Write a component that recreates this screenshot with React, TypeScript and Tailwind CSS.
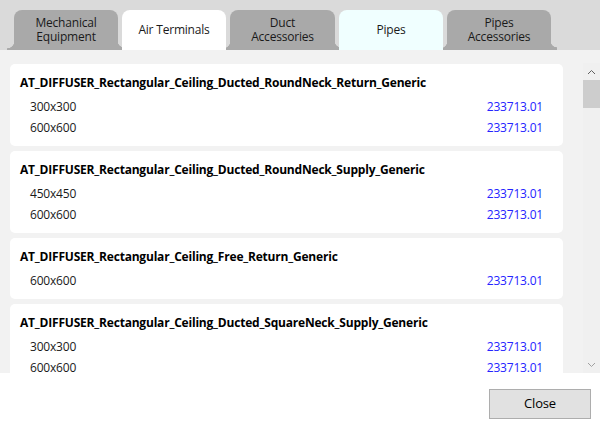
import React from "react";

type Item = { size: string; code: string };
type Family = { name: string; items: Item[] };

const FAMILIES: Family[] = [
  {
    name: "AT_DIFFUSER_Rectangular_Ceiling_Ducted_RoundNeck_Return_Generic",
    items: [
      { size: "300x300", code: "233713.01" },
      { size: "600x600", code: "233713.01" },
    ],
  },
  {
    name: "AT_DIFFUSER_Rectangular_Ceiling_Ducted_RoundNeck_Supply_Generic",
    items: [
      { size: "450x450", code: "233713.01" },
      { size: "600x600", code: "233713.01" },
    ],
  },
  {
    name: "AT_DIFFUSER_Rectangular_Ceiling_Free_Return_Generic",
    items: [{ size: "600x600", code: "233713.01" }],
  },
  {
    name: "AT_DIFFUSER_Rectangular_Ceiling_Ducted_SquareNeck_Supply_Generic",
    items: [
      { size: "300x300", code: "233713.01" },
      { size: "600x600", code: "233713.01" },
    ],
  },
];

type TabDef = { label: string[]; tone: "grey" | "white" | "azure"; width: string };

const TABS: TabDef[] = [
  { label: ["Mechanical", "Equipment"], tone: "grey", width: "w-[104px]" },
  { label: ["Air Terminals"], tone: "white", width: "w-[104px]" },
  { label: ["Duct", "Accessories"], tone: "grey", width: "w-[105px]" },
  { label: ["Pipes"], tone: "azure", width: "w-[104px]" },
  { label: ["Pipes", "Accessories"], tone: "grey", width: "w-[104px]" },
];

function Tab({ tab }: { tab: TabDef }) {
  const bg =
    tab.tone === "grey" ? "bg-[#a9a9a9]" : tab.tone === "white" ? "bg-white z-10" : "bg-[#f0ffff] z-10";
  return (
    <div
      className={`relative h-[40px] ${tab.width} ${bg} rounded-t-[8px] flex items-center justify-center text-center text-[12px] leading-[14px] text-[#1a1a1a]`}
    >
      {tab.tone === "grey" && (
        <>
          <span className="absolute bottom-0 left-[-7px] w-[7px] h-[9px] bg-[radial-gradient(circle_at_0_0,#dadada_7px,#a9a9a9_7.6px)]" />
          <span className="absolute bottom-0 right-[-6px] w-[6px] h-[9px] bg-[radial-gradient(circle_at_100%_0,#dadada_6px,#a9a9a9_6.6px)]" />
        </>
      )}
      <span>
        {tab.label.map((l, i) => (
          <React.Fragment key={l}>
            {i > 0 && <br />}
            {l}
          </React.Fragment>
        ))}
      </span>
    </div>
  );
}

function Card({ family }: { family: Family }) {
  return (
    <div className="bg-white rounded-[5px] pt-[11px] pb-[8px] shrink-0">
      <div className="px-[10px] h-[16px] leading-[16px] font-bold text-[12px] text-black whitespace-nowrap">
        {family.name}
      </div>
      <div className="mt-[5px]">
        {family.items.map((it, i) => (
          <div key={i} className="h-[21px] flex items-center justify-between pl-[20px] pr-[20px] text-[12px]">
            <span className="text-[#1a1a1a]">{it.size}</span>
            <span className="text-[#2424ff]">{it.code}</span>
          </div>
        ))}
      </div>
    </div>
  );
}

export default function App() {
  return (
    <div className="w-[600px] h-[434px] flex flex-col bg-white overflow-hidden font-['Open_Sans','Noto_Sans',sans-serif] tracking-[-0.2px]">
      <div className="h-[50px] bg-[#dadada] flex items-end pl-[14px] gap-[4px] shrink-0">
        {TABS.map((t) => (
          <Tab key={t.label.join(" ")} tab={t} />
        ))}
      </div>

      <div className="h-[323px] bg-[#f2f2f2] flex shrink-0">
        <div className="w-[553px] ml-[10px] pt-[14px] flex flex-col gap-[5px] overflow-hidden">
          {FAMILIES.map((f) => (
            <Card key={f.name} family={f} />
          ))}
        </div>
        <div className="ml-[20px] mt-[13px] w-[17px] bg-[#f0f0f0] flex flex-col">
          <div className="h-[17px] flex items-center justify-center text-[#606060]">
            <svg width="9" height="6" viewBox="0 0 9 6">
              <path d="M1 5 L4.5 1.5 L8 5" fill="none" stroke="currentColor" strokeWidth="1" />
            </svg>
          </div>
          <div className="h-[28px] bg-[#cdcdcd]" />
          <div className="flex-1" />
          <div className="h-[17px] flex items-center justify-center text-[#a0a0a0]">
            <svg width="9" height="6" viewBox="0 0 9 6">
              <path d="M1 1 L4.5 4.5 L8 1" fill="none" stroke="currentColor" strokeWidth="1" />
            </svg>
          </div>
        </div>
      </div>

      <div className="flex-1 flex justify-end items-start pt-[16px] pr-[9px]">
        <button className="w-[102px] h-[30px] bg-[#e1e1e1] border border-[#adadad] text-[13px] text-black">
          Close
        </button>
      </div>
    </div>
  );
}
